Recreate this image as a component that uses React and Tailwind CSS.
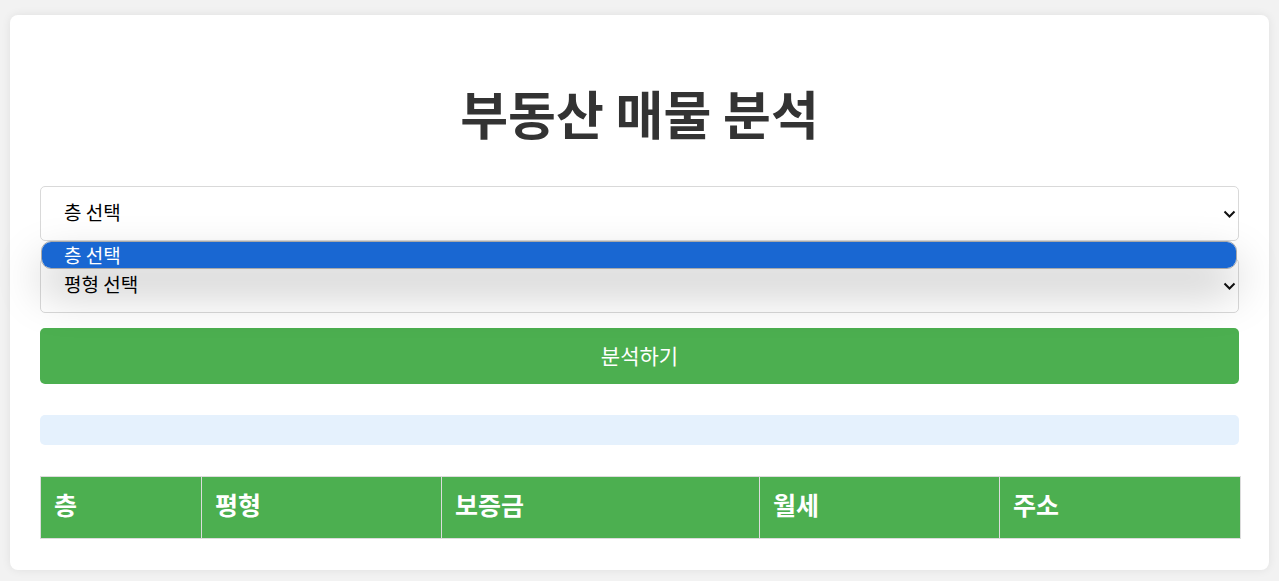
import React from "react";

const font = { fontFamily: '"Noto Sans CJK KR", "Noto Sans", sans-serif' };

const Chevron = () => (
  <svg
    className="pointer-events-none absolute right-[2px] top-1/2 -translate-y-1/2"
    width="13"
    height="8"
    viewBox="0 0 13 8"
    fill="none"
  >
    <path d="M1.5 1.5 L6.5 6.5 L11.5 1.5" stroke="#111" strokeWidth="2" />
  </svg>
);

const SelectBox = ({ label }) => (
  <div className="relative h-[55px] w-full rounded-[5px] border border-[#d9d9d9] bg-white">
    <div className="flex h-full items-center pb-[2px] pl-[23px] text-[19px] text-black">{label}</div>
    <Chevron />
  </div>
);

const columns = [
  { name: "층", w: "w-[161px]" },
  { name: "평형", w: "w-[240px]" },
  { name: "보증금", w: "w-[318px]" },
  { name: "월세", w: "w-[240px]" },
  { name: "주소", w: "w-[241px]" },
];

export default function App() {
  return (
    <div className="min-h-[581px] bg-[#f2f2f2] px-[10px] pt-[15px] pb-[11px]" style={font}>
      <div className="relative rounded-lg bg-white px-[30px] pt-[30px] pb-[31px] shadow-[0_0_10px_rgba(0,0,0,0.08)]">
        <h1 className="mt-[36px] mb-[41px] text-center text-[52px] font-bold leading-[64px] text-[#333]">
          부동산 매물 분석
        </h1>

        <div className="relative mb-[17px]">
          <SelectBox label="층 선택" />
          {/* open dropdown list */}
          <div className="absolute left-[1px] right-[2px] top-[55px] z-10 rounded-[10px] border border-[#a9a9a9] bg-white shadow-[0_22px_45px_rgba(0,0,0,0.25)]">
            <div className="flex h-[26px] items-center rounded-[9px] bg-[#1967d2] pl-[22px] text-[19px] text-white">
              층 선택
            </div>
          </div>
        </div>

        <div className="mb-[15px]">
          <SelectBox label="평형 선택" />
        </div>

        <button className="mb-[31px] flex h-[56px] w-full items-center justify-center rounded-[5px] bg-[#4caf50] text-[21px] text-white">
          분석하기
        </button>

        <div className="mb-[31px] h-[30px] rounded-[5px] bg-[#e5f1fd]" />

        <table className="w-full table-fixed border-collapse">
          <thead>
            <tr>
              {columns.map((c) => (
                <th
                  key={c.name}
                  className={`${c.w} border border-[#dcdcdc] bg-[#4caf50] pt-[10px] pb-[16px] pl-[13px] text-left text-[25px] font-bold leading-[35px] text-white`}
                >
                  {c.name}
                </th>
              ))}
            </tr>
          </thead>
        </table>
      </div>
    </div>
  );
}
